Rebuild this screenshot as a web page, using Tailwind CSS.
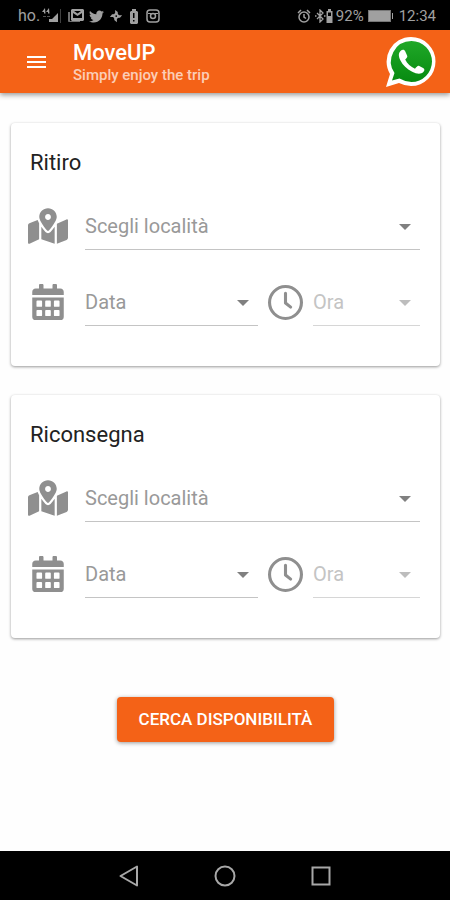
<!DOCTYPE html>
<html lang="it">
<head>
  <meta charset="UTF-8" />
  <meta name="viewport" content="width=device-width, initial-scale=1.0" />
  <title>MoveUP | Simply enjoy the trip</title>
  <script src="https://cdn.jsdelivr.net/npm/@tailwindcss/browser@4"></script>
</head>
<body class="min-h-screen flex flex-col bg-[#fefefe] font-['Roboto',sans-serif]">

  <!-- Shared icons -->
  <svg class="hidden" aria-hidden="true">
    <symbol id="icon-map" viewBox="0 0 576 512">
      <path d="M288 0c-69.59 0-126 56.41-126 126 0 56.26 82.35 158.8 113.9 196.02 6.39 7.54 17.82 7.54 24.2 0C331.65 284.8 414 182.26 414 126 414 56.41 357.59 0 288 0zm0 168c-23.2 0-42-18.8-42-42s18.8-42 42-42 42 18.8 42 42-18.8 42-42 42zM20.12 215.95A32.006 32.006 0 0 0 0 245.66v250.32c0 11.32 11.43 19.06 21.94 14.86L160 448V214.92c-8.84-15.98-16.07-31.54-21.25-46.42L20.12 215.95zM288 359.67c-14.07 0-27.38-6.18-36.51-16.96-19.66-23.2-40.57-49.62-59.49-76.72v182l192 64V266c-18.92 27.09-39.82 53.52-59.49 76.72-9.13 10.77-22.44 16.95-36.51 16.95zm266.06-198.51L416 224v288l139.88-55.95A31.996 31.996 0 0 0 576 426.34V176.02c0-11.32-11.43-19.06-21.94-14.86z" />
    </symbol>
    <symbol id="icon-calendar" viewBox="0 0 448 512">
      <path d="M400 64h-48V16c0-8.800-7.200-16-16-16h-32c-8.800 0-16 7.200-16 16v48H160V16c0-8.800-7.200-16-16-16h-32c-8.800 0-16 7.200-16 16v48H48C21.500 64 0 85.500 0 112v44h448v-44c0-26.500-21.500-48-48-48z" />
      <path fill-rule="evenodd" d="M0 192h448v272a48 48 0 0 1-48 48H48a48 48 0 0 1-48-48zM60 248v64q0 12 12 12h56q12 0 12-12v-64q0-12-12-12H72q-12 0-12 12zM184 248v64q0 12 12 12h56q12 0 12-12v-64q0-12-12-12h-56q-12 0-12 12zM308 248v64q0 12 12 12h56q12 0 12-12v-64q0-12-12-12h-56q-12 0-12 12zM60 380v64q0 12 12 12h56q12 0 12-12v-64q0-12-12-12H72q-12 0-12 12zM184 380v64q0 12 12 12h56q12 0 12-12v-64q0-12-12-12h-56q-12 0-12 12zM308 380v64q0 12 12 12h56q12 0 12-12v-64q0-12-12-12h-56q-12 0-12 12z" />
    </symbol>
    <symbol id="icon-clock" viewBox="0 0 34 34">
      <circle cx="17" cy="17" r="15.500" fill="none" stroke="currentColor" stroke-width="3" />
      <path d="M17 8v9.500l5 4" fill="none" stroke="currentColor" stroke-width="3" stroke-linejoin="round" stroke-linecap="round" />
    </symbol>
    <symbol id="icon-caret" viewBox="0 0 12 6">
      <path d="M0 0h12L6 6z" />
    </symbol>
  </svg>

  <!-- Status bar -->
  <div class="h-[30px] shrink-0 bg-black text-[#a0a0a0] text-[15px] leading-none flex items-center justify-between pl-[18px] pr-[14px] pt-[2px]">
    <div class="flex items-center">
      <span class="text-base leading-none">ho.</span>
      <svg class="w-5 h-4 ml-[2px]" viewBox="0 0 20 16" fill="currentColor">
        <path d="M3 0L0 4h2v1.500h1.500zM7 0L4 4h2v1.500h1.500z" />
        <path d="M1 8h3v1H1zM5 8h3v1H5z" opacity=".5" />
        <path d="M7 14h3v-3H7zM10 14h3V8l-3 3zM13 14h3V5l-3 3z" />
        <path d="M18 15h1V1h-1z" opacity=".4" />
      </svg>
      <svg class="w-4 h-4 ml-[6px]" viewBox="0 0 16 16" fill="currentColor">
        <path d="M0 4h2v9h10v1H1q-1 0-1-1z" opacity=".7" />
        <path fill-rule="evenodd" d="M4 1h11l1 1v10l-1 1H4l-1-1V2zM5 5v5h9V5L9.500 8zM6 3l3.500 2.500L13 3z" />
      </svg>
      <svg class="w-[15px] h-[15px] ml-[5px]" viewBox="0 0 512 512" fill="currentColor">
        <path d="M459 152c.3 4.500.3 9 .3 13.600C459.300 304 354 464 161 464 102 464 47 447 0 417c8 1 16 1.300 25 1.300 49 0 94-16.500 130-45-46-1-85-31-98-73 6.500 1 13 1.600 20 1.600 9.400 0 19-1.300 28-3.600-48-10-84-52-84-103v-1.300c14 8 30 13 47 13.600-28-19-47-51-47-87 0-19.500 5-37 14-53 52 64 130 106 217 110-1.600-8-2.600-16-2.600-24 0-58 47-105 105-105 30 0 57 12.700 77 33 24-4.500 46-13 67-25-8 24-24 45-46 58 21-2 42-8 60-16-14 21-32 39-53 54z" />
      </svg>
      <svg class="w-[14px] h-[14px] ml-[5px]" viewBox="0 0 16 16" fill="currentColor">
        <path d="M7 1l3 2.500V6L7 5.500zM15 7l-2.500 3H10l.5-3zM9 15l-3-2.500V10l3 .5zM1 9l2.500-3H6l-.5 3z" />
        <path d="M7 4.500h2L11.500 7v2L9 11.500H7L4.500 9V7zM7.500 7v2h1.500V7z" fill-rule="evenodd" />
      </svg>
      <svg class="w-[10px] h-[15px] ml-[6px]" viewBox="0 0 10 15" fill="currentColor">
        <path fill-rule="evenodd" d="M3 0h4v2h1l1 1v11l-1 1H2l-1-1V3l1-1h1zM4 4v5h1.500V4zM4 11v1.500h1.500V11z" />
      </svg>
      <svg class="w-[14px] h-[14px] ml-[7px]" viewBox="0 0 14 14" fill="none" stroke="currentColor" stroke-width="1.500">
        <rect x="1" y="1" width="12" height="12" rx="3" />
        <circle cx="7" cy="7" r="2.500" />
        <path d="M2 4.500h3M9 4.500h3" stroke-width="1" />
      </svg>
    </div>
    <div class="flex items-center">
      <svg class="w-[14px] h-[14px]" viewBox="0 0 14 14" fill="none" stroke="currentColor" stroke-width="1.500">
        <circle cx="7" cy="8" r="5" />
        <path d="M7 5v3l2 1.500M1 4l3-3M13 4l-3-3" />
      </svg>
      <svg class="w-[11px] h-[14px] ml-1" viewBox="0 0 11 14" fill="none" stroke="currentColor" stroke-width="1.300">
        <path d="M2 4l6 6-3 3V1l3 3-6 6M0 7h1.500M9 7h1.500" />
      </svg>
      <svg class="w-[7px] h-[14px]" viewBox="0 0 7 14" fill="currentColor">
        <path fill-rule="evenodd" d="M2 0h3v2h1.500v12H.5V2H2zM2 3.500V7h3V3.500z" />
      </svg>
      <span class="ml-[3px]">92%</span>
      <svg class="w-[26px] h-3 ml-1" viewBox="0 0 26 12">
        <rect x=".5" y=".5" width="22" height="11" fill="#a0a0a0" stroke="#777" />
        <path d="M24 3h1v6h-1z" fill="#a0a0a0" />
      </svg>
      <span class="ml-[5px]">12:34</span>
    </div>
  </div>

  <!-- App bar -->
  <header class="h-[63px] shrink-0 bg-[#f46217] text-white flex items-center pl-[27px] pr-[14px] shadow-[0_2px_5px_rgba(0,0,0,0.4)]">
    <button type="button" aria-label="Menu" class="w-[19px] h-[14px]">
      <svg class="block w-full h-full" viewBox="0 0 19 14" fill="currentColor">
        <path d="M0 1h19v2H0zM0 6h19v2H0zM0 11h19v2H0z" />
      </svg>
    </button>
    <div class="ml-[27px] pt-[2px] flex-1">
      <h1 class="text-[22px] leading-6 font-medium">MoveUP</h1>
      <p class="text-[15px] leading-5 font-medium text-white/70">Simply enjoy the trip</p>
    </div>
    <a href="#whatsapp" aria-label="WhatsApp">
      <svg class="block w-[50px] h-[50px]" viewBox="0 0 50 50">
        <defs>
          <linearGradient id="wa" x1="0" y1="0" x2="0" y2="1">
            <stop offset="0" stop-color="#20a828" />
            <stop offset="1" stop-color="#078a10" />
          </linearGradient>
        </defs>
        <path fill="#fff" d="M25 0A24.500 24.500 0 0 1 49.500 24.500 24.500 24.500 0 0 1 25 49q-6 0-12-3L0 50l4-13A24.500 24.500 0 0 1 25 0z" />
        <path fill="url(#wa)" d="M25.500 4A20.500 20.500 0 0 1 46 24.500 20.500 20.500 0 0 1 25.500 45q-6 0-12-3.500L6 43.500l2.500-7.500A20.500 20.500 0 0 1 25.500 4z" />
        <path fill="#fff" d="M14.500 14c2-1.800 4-1.300 4.800.4l1.900 4.400c.5 1.300-.5 2.400-2 3.800 2 4.400 5.500 7.400 9.800 9.200 1.700-2 2.800-3.600 4.300-2.800l4.200 2.200c1.300.8 1 2.400 0 3.600-2.600 3-7 2.200-11.300 0-5.600-2.900-9.300-6.800-11.600-11.100-2-3.800-2.600-7.200-.1-9.700z" />
      </svg>
    </a>
  </header>

  <main class="flex-1 pl-[11px] pr-[10px] pt-[30px] pb-8">
    <form class="flex flex-col gap-[29px]">

      <!-- Ritiro -->
      <section class="bg-white rounded-sm pt-[26px] pb-10 pl-[17px] pr-5 shadow-[0_1px_3px_rgba(0,0,0,0.4)]">
        <h2 class="pl-[2px] text-[22px] leading-7 text-[#222]">Ritiro</h2>
        <div class="mt-[25px] grid grid-cols-[40px_1fr] gap-x-[17px] items-center">
          <svg class="w-10 h-9 text-[#8f8f8f]" fill="currentColor"><use href="#icon-map" /></svg>
          <div class="relative">
            <select aria-label="Località di ritiro" class="block w-full h-12 appearance-none border-b border-[#c4c4c4] text-xl text-[#999]">
              <option>Scegli località</option>
            </select>
            <svg class="absolute right-[9px] top-[22px] w-3 h-[6px] text-[#808080] pointer-events-none" fill="currentColor"><use href="#icon-caret" /></svg>
          </div>
        </div>
        <div class="mt-7 grid grid-cols-[40px_180fr_35px_107fr] gap-x-[10px] items-center">
          <svg class="w-10 h-9 text-[#8f8f8f]" fill="currentColor"><use href="#icon-calendar" /></svg>
          <div class="relative ml-[7px]">
            <select aria-label="Data di ritiro" class="block w-full h-12 appearance-none border-b border-[#c4c4c4] text-xl text-[#999]">
              <option>Data</option>
            </select>
            <svg class="absolute right-[9px] top-[22px] w-3 h-[6px] text-[#808080] pointer-events-none" fill="currentColor"><use href="#icon-caret" /></svg>
          </div>
          <svg class="w-[35px] h-[35px] text-[#8f8f8f]" fill="currentColor"><use href="#icon-clock" /></svg>
          <div class="relative">
            <select aria-label="Ora di ritiro" disabled class="block w-full h-12 appearance-none border-b border-[#d6d6d6] text-xl text-[#c4c4c4] opacity-100">
              <option>Ora</option>
            </select>
            <svg class="absolute right-[9px] top-[22px] w-3 h-[6px] text-[#bdbdbd] pointer-events-none" fill="currentColor"><use href="#icon-caret" /></svg>
          </div>
        </div>
      </section>

      <!-- Riconsegna -->
      <section class="bg-white rounded-sm pt-[26px] pb-10 pl-[17px] pr-5 shadow-[0_1px_3px_rgba(0,0,0,0.4)]">
        <h2 class="pl-[2px] text-[22px] leading-7 text-[#222]">Riconsegna</h2>
        <div class="mt-[25px] grid grid-cols-[40px_1fr] gap-x-[17px] items-center">
          <svg class="w-10 h-9 text-[#8f8f8f]" fill="currentColor"><use href="#icon-map" /></svg>
          <div class="relative">
            <select aria-label="Località di riconsegna" class="block w-full h-12 appearance-none border-b border-[#c4c4c4] text-xl text-[#999]">
              <option>Scegli località</option>
            </select>
            <svg class="absolute right-[9px] top-[22px] w-3 h-[6px] text-[#808080] pointer-events-none" fill="currentColor"><use href="#icon-caret" /></svg>
          </div>
        </div>
        <div class="mt-7 grid grid-cols-[40px_180fr_35px_107fr] gap-x-[10px] items-center">
          <svg class="w-10 h-9 text-[#8f8f8f]" fill="currentColor"><use href="#icon-calendar" /></svg>
          <div class="relative ml-[7px]">
            <select aria-label="Data di riconsegna" class="block w-full h-12 appearance-none border-b border-[#c4c4c4] text-xl text-[#999]">
              <option>Data</option>
            </select>
            <svg class="absolute right-[9px] top-[22px] w-3 h-[6px] text-[#808080] pointer-events-none" fill="currentColor"><use href="#icon-caret" /></svg>
          </div>
          <svg class="w-[35px] h-[35px] text-[#8f8f8f]" fill="currentColor"><use href="#icon-clock" /></svg>
          <div class="relative">
            <select aria-label="Ora di riconsegna" disabled class="block w-full h-12 appearance-none border-b border-[#d6d6d6] text-xl text-[#c4c4c4] opacity-100">
              <option>Ora</option>
            </select>
            <svg class="absolute right-[9px] top-[22px] w-3 h-[6px] text-[#bdbdbd] pointer-events-none" fill="currentColor"><use href="#icon-caret" /></svg>
          </div>
        </div>
      </section>

      <button type="button" class="mt-[30px] self-center h-[45px] px-[22px] rounded-sm bg-[#f46217] text-white text-[17px] font-medium whitespace-nowrap shadow-[0_1px_4px_rgba(0,0,0,0.4)]">CERCA DISPONIBILITÀ</button>
    </form>
  </main>

  <!-- System navigation -->
  <nav class="h-[49px] shrink-0 bg-black text-[#a8a8a8] flex items-center justify-center gap-[75px]">
    <button type="button" aria-label="Indietro">
      <svg class="block w-5 h-[22px]" viewBox="0 0 20 22" fill="none" stroke="currentColor" stroke-width="2" stroke-linejoin="round"><path d="M18 1.500v19L1.500 11z" /></svg>
    </button>
    <button type="button" aria-label="Home">
      <svg class="block w-[22px] h-[22px]" viewBox="0 0 22 22" fill="none" stroke="currentColor" stroke-width="2"><circle cx="11" cy="11" r="9.500" /></svg>
    </button>
    <button type="button" aria-label="Recenti">
      <svg class="block w-5 h-5" viewBox="0 0 20 20" fill="none" stroke="currentColor" stroke-width="2"><rect x="1.500" y="1.500" width="17" height="17" /></svg>
    </button>
  </nav>

</body>
</html>
